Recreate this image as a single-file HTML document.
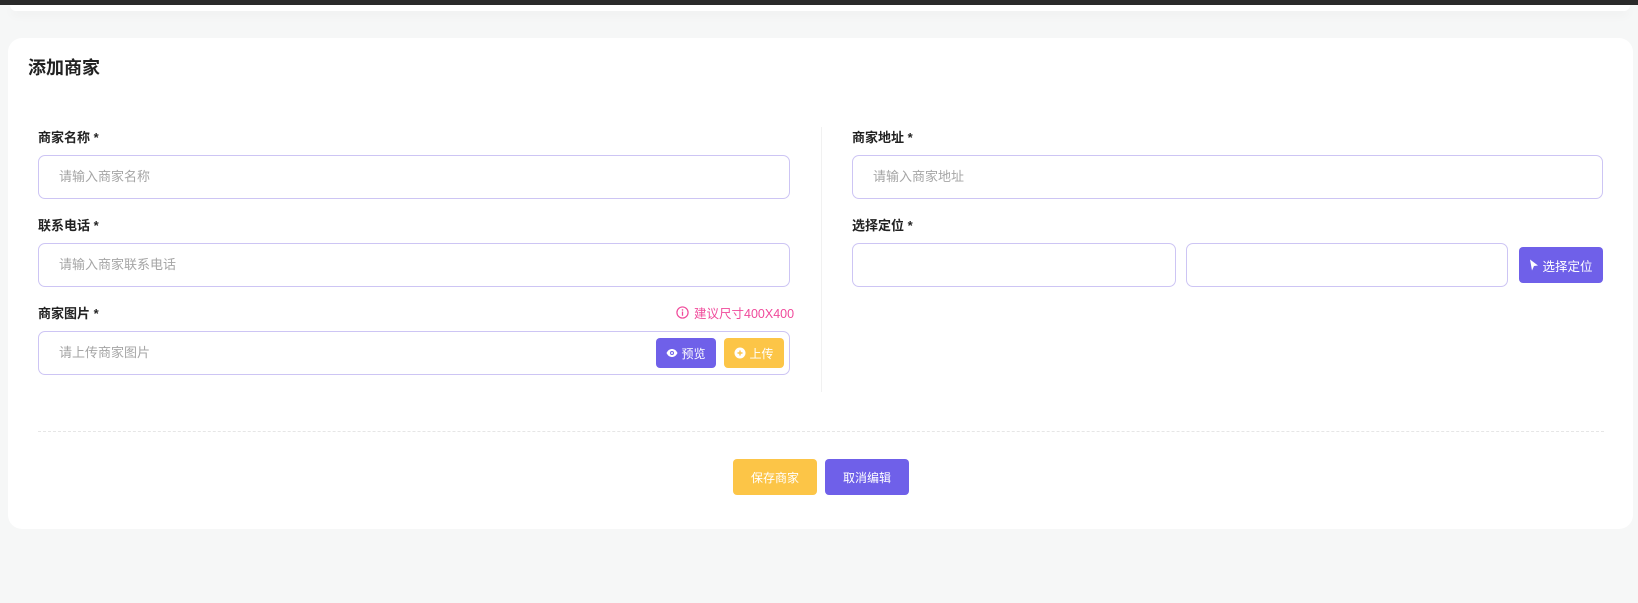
<!DOCTYPE html>
<html><head><meta charset="utf-8"><style>
*{box-sizing:border-box;margin:0;padding:0}
body{width:1638px;height:603px;background:#f6f7f7;font-family:"Liberation Sans","Noto Sans CJK SC",sans-serif;position:relative;overflow:hidden}
.topbar{position:absolute;left:0;top:0;width:1638px;height:5px;background:#2a2a2a}
.hdr{position:absolute;left:10px;top:5px;width:1620px;height:6px;background:#fff;border-radius:0 0 8px 8px;box-shadow:0 4px 10px rgba(0,0,0,.04)}
.card{position:absolute;left:8px;top:38px;width:1625px;height:491px;background:#fff;border-radius:14px}
.abs{position:absolute}
.title{left:28px;top:54px;font-size:18px;font-weight:bold;color:#222}
.lbl{font-size:13px;font-weight:bold;color:#222}
.inp{border:1.5px solid #cdc5f4;border-radius:7px;height:44px;font-size:13px;color:#a5a5a5;padding-left:20px;line-height:42px}
.btn{color:#fff;font-size:12px;border-radius:4px;display:flex;align-items:center;justify-content:center;gap:3px}
.pur{background:#6f60e9}.yel{background:#fcc547}
</style></head><body>
<div class="topbar"></div><div class="hdr"></div>
<div class="card"></div>
<div class="abs title">添加商家</div>
<div class="abs lbl" style="left:38px;top:127px">商家名称 *</div>
<div class="abs inp" style="left:38px;top:155px;width:752px">请输入商家名称</div>
<div class="abs lbl" style="left:38px;top:215px">联系电话 *</div>
<div class="abs inp" style="left:38px;top:243px;width:752px">请输入商家联系电话</div>
<div class="abs lbl" style="left:38px;top:303px">商家图片 *</div>
<div class="abs" style="left:676px;top:303px;font-size:12.5px;color:#f04a9b;display:flex;align-items:center;gap:5px"><svg width="13" height="13" viewBox="0 0 14 14"><circle cx="7" cy="7" r="6" fill="none" stroke="#f04a9b" stroke-width="1.3"/><rect x="6.3" y="6" width="1.4" height="4.5" fill="#f04a9b"/><circle cx="7" cy="4.2" r=".9" fill="#f04a9b"/></svg>建议尺寸400X400</div>
<div class="abs inp" style="left:38px;top:331px;width:752px">请上传商家图片</div>
<div class="abs btn pur" style="left:656px;top:338px;width:60px;height:30px"><svg width="12" height="12" viewBox="0 0 12 12"><path d="M0.5 6C2 3 4 2 6 2s4 1 5.5 4C10 9 8 10 6 10S2 9 .5 6z" fill="#fff"/><circle cx="6" cy="6" r="2" fill="#6f60e9"/><circle cx="6" cy="6" r="1" fill="#fff"/></svg>预览</div>
<div class="abs btn yel" style="left:724px;top:338px;width:60px;height:30px"><svg width="12" height="12" viewBox="0 0 12 12"><circle cx="6" cy="6" r="5.5" fill="#fff"/><path d="M6 3.5v5M3.5 6h5" stroke="#fcc547" stroke-width="1.4"/></svg>上传</div>
<div class="abs" style="left:821px;top:127px;width:1px;height:265px;background:#f1f1f1"></div>
<div class="abs lbl" style="left:852px;top:127px">商家地址 *</div>
<div class="abs inp" style="left:852px;top:155px;width:751px">请输入商家地址</div>
<div class="abs lbl" style="left:852px;top:215px">选择定位 *</div>
<div class="abs inp" style="left:852px;top:243px;width:324px"></div>
<div class="abs inp" style="left:1186px;top:243px;width:322px"></div>
<div class="abs btn pur" style="left:1519px;top:247px;width:84px;height:36px;font-size:12.5px"><svg width="10" height="12" viewBox="0 0 10 12"><path d="M1 0.5L9 6.5 5 7 3 11.5z" fill="#fff"/></svg> 选择定位</div>
<div class="abs" style="left:38px;top:431px;width:1566px;border-top:1px dashed #e6e6e6"></div>
<div class="abs btn yel" style="left:733px;top:459px;width:84px;height:36px">保存商家</div>
<div class="abs btn pur" style="left:825px;top:459px;width:84px;height:36px">取消编辑</div>
</body></html>
